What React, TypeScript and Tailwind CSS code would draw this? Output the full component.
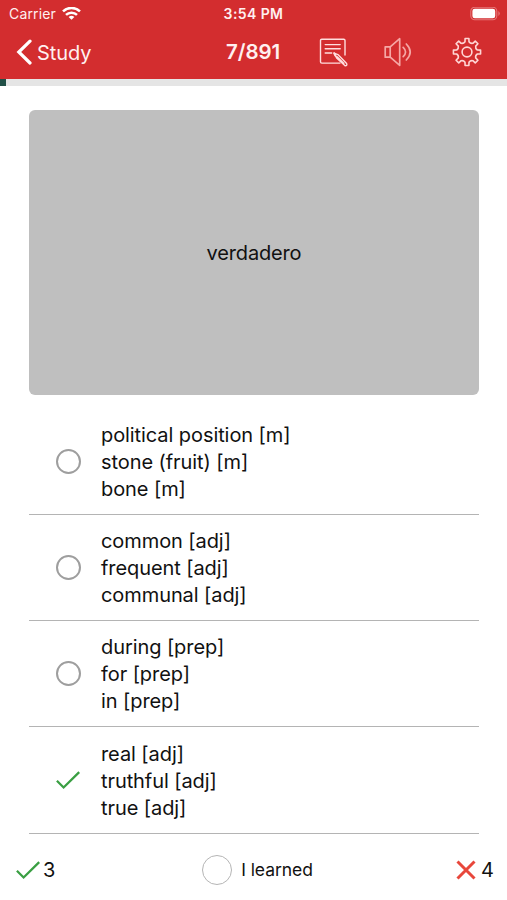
const answers = [
  { lines: ['political position [m]', 'stone (fruit) [m]', 'bone [m]'], correct: false },
  { lines: ['common [adj]', 'frequent [adj]', 'communal [adj]'], correct: false },
  { lines: ['during [prep]', 'for [prep]', 'in [prep]'], correct: false },
  { lines: ['real [adj]', 'truthful [adj]', 'true [adj]'], correct: true },
];

function gearPath() {
  const pt = (r: number, deg: number) => {
    const a = (deg * Math.PI) / 180;
    return `${(15 + r * Math.sin(a)).toFixed(2)} ${(15 - r * Math.cos(a)).toFixed(2)}`;
  };
  let d = '';
  for (let i = 0; i < 8; i++) {
    const a = i * 45;
    d += `${i === 0 ? 'M' : 'L'}${pt(10.5, a - 11)}L${pt(13.7, a - 8)}L${pt(13.7, a + 8)}L${pt(10.5, a + 11)}`;
    d += `Q${pt(8.9, a + 22.5)} ${pt(10.5, a + 34)}`;
  }
  return d + 'Z';
}

function Check() {
  return (
    <svg className="block h-5 w-6 shrink-0" viewBox="0 0 24 20" fill="none" stroke="#3a9f43" strokeWidth="2.3">
      <path d="M.9 10.8 7.6 17.5 23.2 2.1" />
    </svg>
  );
}

function Header() {
  return (
    <header className="h-[79px] bg-[#d32d2f] text-[#fff0f0]">
      <div className="grid h-[27px] grid-cols-[168px_171px_1fr] items-center pr-[6px]">
        <div className="flex items-center gap-[6px] pl-[9px]">
          <span className="text-[14px] leading-[28px] tracking-[0.15px]">Carrier</span>
          <svg className="h-[14px] w-[19px]" viewBox="0 0 19 14" fill="none" stroke="#fff" strokeWidth="2.5">
            <path d="M1 4.4C5.8-.2 13.2-.2 18 4.4M4 7.9c3-3 8-3 11 0" />
            <path d="M9.5 12.8 6.6 10q2.9-2.3 5.8 0Z" fill="#fff" stroke="none" />
          </svg>
        </div>
        <div className="text-center text-[14px] leading-[28px] font-semibold tracking-[0.4px]">3:54 PM</div>
        <svg className="ml-auto h-[14px] w-[31px]" viewBox="0 0 31 14">
          <rect x=".8" y=".2" width="26" height="12.6" rx="4" fill="none" stroke="#e57779" strokeWidth="1.1" />
          <rect x="2.4" y="1.7" width="22.8" height="9.6" rx="2.4" fill="#fff" />
          <path d="M28.4 4.1q2.8 2.4 0 4.8Z" fill="#e57779" />
        </svg>
      </div>
      <div className="flex h-[50px] items-center pl-4">
        <svg className="h-[26px] w-[17px]" viewBox="0 0 17 26" fill="none" stroke="#fff" strokeWidth="3.2" strokeLinecap="round">
          <path d="M14 2.2 2.8 13 14 24" />
        </svg>
        <span className="ml-1 w-[189px] pt-px text-[20px] tracking-[-0.05px]">Study</span>
        <span className="w-[93px] pt-px text-[20.5px] font-semibold tracking-[-0.05px]">7/891</span>
        <svg className="h-[30px] w-[30px]" viewBox="0 0 30 30" fill="none" stroke="#ffdede" strokeWidth="1.4" strokeLinejoin="round" strokeLinecap="round">
          <path d="M26 18V3.5q0-1.3-1.3-1.3H2.8Q1.5 2.2 1.5 3.5v21.3q0 1.3 1.3 1.3H21" />
          <path d="M6.2 7.6h15M6.2 11.8h15M6.2 16h6.5" />
          <path d="m15.2 16.2 4.2 1.7 8.2 8.5q1 2.4-1.5 2.3l-8.5-7.8Z" />
          <path d="m15.2 16.2 1.2 2.3M18 20l6.5 6.4" strokeWidth="2" />
        </svg>
        <svg className="ml-[34px] h-[30px] w-[30px]" viewBox="0 0 30 30" fill="none" stroke="#f6a7a5" strokeWidth="1.7" strokeLinejoin="round" strokeLinecap="round">
          <path d="M7.2 9.8 16.7 1.7v26.6L7.2 20.2ZM7.2 9.8H2.2v10.4h5" />
          <path d="M20.2 10.4q4.7 4.6 0 9.2M23.3 7q7.8 8 0 16" />
        </svg>
        <svg className="ml-[39px] h-[30px] w-[30px]" viewBox="0 0 30 30" fill="none" stroke="#ffd6d5" strokeWidth="1.6" strokeLinejoin="round">
          <path d={gearPath()} />
          <circle cx="15" cy="15" r="4.9" />
        </svg>
      </div>
    </header>
  );
}

export default function App() {
  return (
    <div className="flex h-[900px] w-[507px] flex-col overflow-hidden bg-white font-['Inter','Liberation_Sans',sans-serif] text-[#111]">
      <Header />
      <div className="h-[7px] bg-[#e5e5e5]">
        <div className="h-[7px] w-[6px] bg-[#204f46]" />
      </div>
      <main className="px-[29px] pt-6">
        <div className="flex h-[285px] w-[450px] items-center justify-center rounded-[6px] bg-[#bfbfbf] text-[20px] tracking-[-0.15px]">
          verdadero
        </div>
        <div className="mt-[13.5px] w-[450px]">
          {answers.map((a) => (
            <div key={a.lines[0]} className="flex h-[106.3px] items-center border-b-[1.5px] border-[#b4b4b4] pt-[2px] pl-[27px]">
              <div className="flex w-[45px] items-center pb-[2px]">
                {a.correct ? <Check /> : <div className="h-[25px] w-[25px] rounded-full border-2 border-[#9e9e9e]" />}
              </div>
              <div className="text-[20px] leading-[27px] tracking-[-0.08px]">
                {a.lines.map((l) => (
                  <div key={l}>{l}</div>
                ))}
              </div>
            </div>
          ))}
        </div>
      </main>
      <footer className="grid flex-1 grid-cols-[150px_1fr_150px] items-center pt-[6px] pr-[13px] pl-4">
        <div className="flex items-center gap-[3px]">
          <Check />
          <span className="text-[20px]">3</span>
        </div>
        <div className="flex items-center justify-center gap-[9px] pl-[5px]">
          <div className="h-[30px] w-[30px] shrink-0 rounded-full border border-[#b5b5b5]" />
          <span className="text-[17.5px] tracking-[-0.05px] whitespace-nowrap">I learned</span>
        </div>
        <div className="flex items-center justify-end gap-[5px]">
          <svg className="h-5 w-5" viewBox="0 0 20 20" stroke="#e8473b" strokeWidth="3">
            <path d="m1.5 1.5 17 17M18.5 1.5l-17 17" />
          </svg>
          <span className="text-[20px]">4</span>
        </div>
      </footer>
    </div>
  );
}
